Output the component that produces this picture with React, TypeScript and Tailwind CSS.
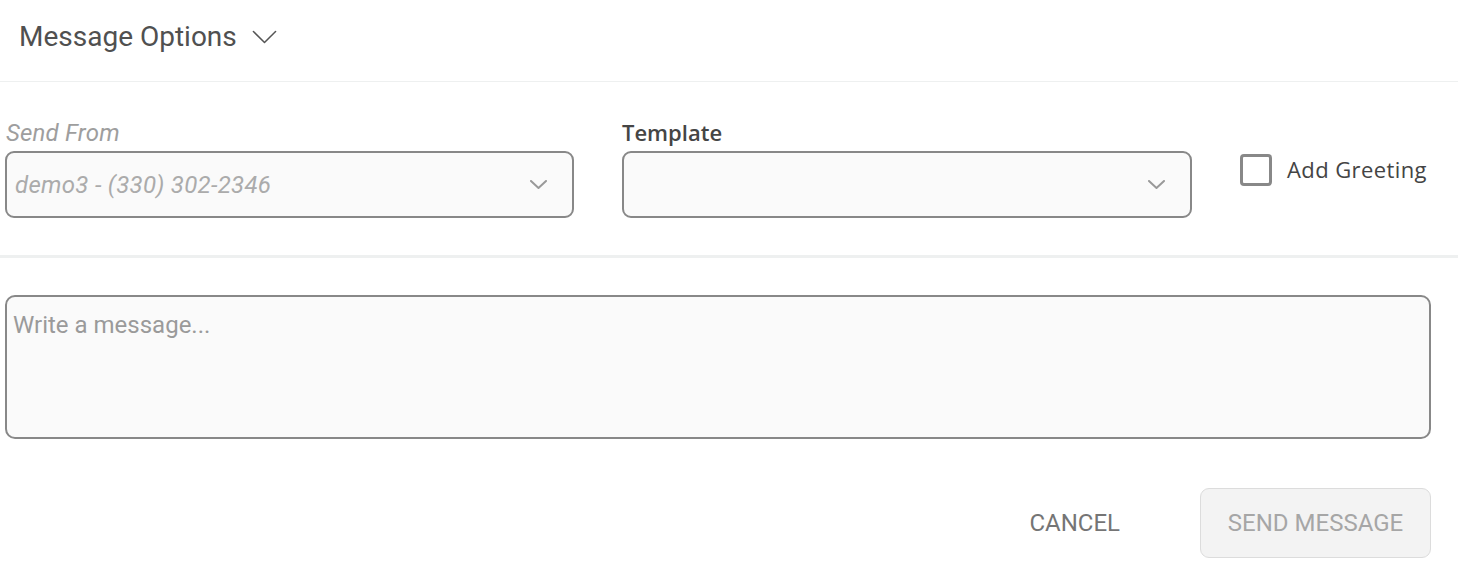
import React from "react";

function Chevron({ className, sw = 2 }: { className?: string; sw?: number }) {
  return (
    <svg viewBox="0 0 26 14" className={className} fill="none" stroke="currentColor" strokeWidth={sw} strokeLinecap="round" strokeLinejoin="round" preserveAspectRatio="none">
      <path d="M1.5 1.5 L13 12.5 L24.5 1.5" />
    </svg>
  );
}

export default function App() {
  return (
    <div className="w-[1458px] h-[578px] bg-white font-['Roboto',sans-serif] overflow-hidden">
      <div className="h-[82px] flex items-center pl-[19px] pb-[7px] border-b border-[#eef0f0]">
        <span className="text-[28px] text-[#505050] leading-none">Message Options</span>
        <Chevron className="ml-[15px] w-[25px] h-[14px] text-[#555]" sw={1.6} />
      </div>
      <div className="h-[176px] flex pt-[38px] border-b-[3px] border-[#eef0f0]">
        <div className="ml-[5px] w-[569px] flex flex-col">
          <span className="ml-[1px] text-[24px] italic text-[#9e9e9e] leading-[26px] h-[31px] tracking-[0.2px]">Send From</span>
          <div className="h-[67px] rounded-[9px] border-2 border-[#888] bg-[#fafafa] flex items-center justify-between pl-[8px] pr-[25px]">
            <span className="text-[24px] italic text-[#ababab] tracking-[0.3px]">demo3 - (330) 302-2346</span>
            <Chevron className="w-[17px] h-[9px] text-[#999]" sw={3} />
          </div>
        </div>
        <div className="ml-[48px] w-[570px] flex flex-col">
          <span className="font-['Open_Sans',sans-serif] font-semibold text-[22px] text-[#454545] leading-[24px] h-[31px]">Template</span>
          <div className="h-[67px] rounded-[9px] border-2 border-[#888] bg-[#fafafa] flex items-center justify-end pr-[25px]">
            <Chevron className="w-[17px] h-[9px] text-[#999]" sw={3} />
          </div>
        </div>
        <div className="ml-[48px] flex items-center self-start mt-[34px]">
          <div className="w-[32px] h-[32px] border-[3px] border-[#888] rounded-[4px] bg-white" />
          <span className="ml-[15px] font-['Open_Sans',sans-serif] text-[22px] text-[#444] leading-[30px] tracking-[0.4px] -mt-[2px]">Add Greeting</span>
        </div>
      </div>
      <div className="pt-[37px] pl-[5px] pr-[27px]">
        <div className="h-[144px] rounded-[10px] border-2 border-[#888] bg-[#fafafa] pl-[6px] pt-[16px]">
          <span className="block text-[24px] text-[#9a9a9a] leading-none">Write a message...</span>
        </div>
      </div>
      <div className="flex justify-end items-center pr-[27px] pt-[49px]">
        <span className="text-[24px] text-[#757575] mr-[80px]">CANCEL</span>
        <div className="w-[231px] h-[70px] rounded-[9px] border border-[#dcdcdc] bg-[#f3f3f3] flex items-center justify-center">
          <span className="text-[24px] text-[#a6a6a6]">SEND MESSAGE</span>
        </div>
      </div>
    </div>
  );
}
